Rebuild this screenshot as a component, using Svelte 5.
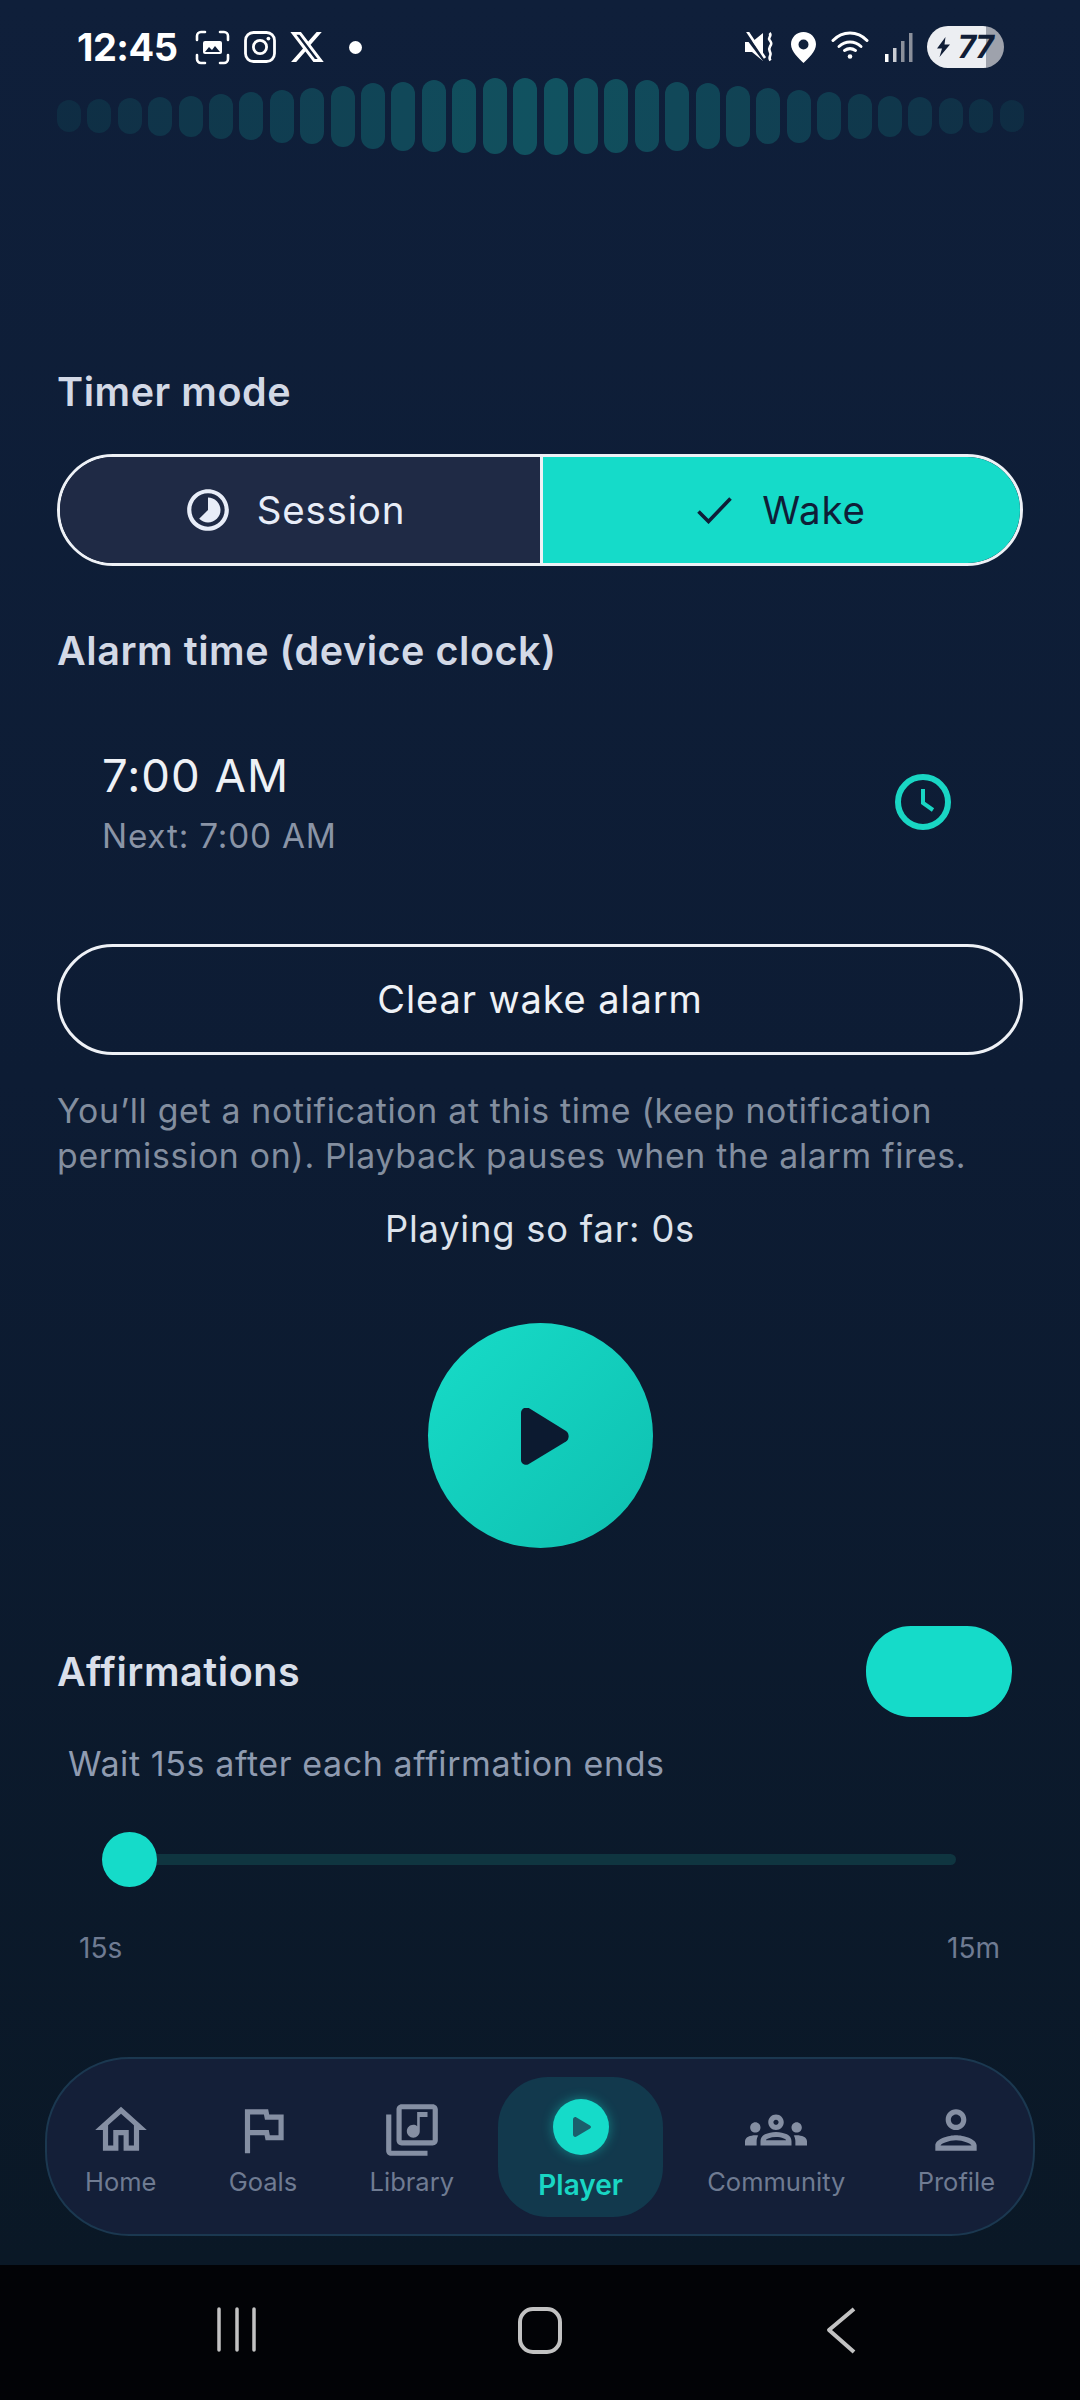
<script lang="ts">
	// Wave bar heights, left half; the right half mirrors it.
	const half = [32, 34, 36, 39, 41, 45, 48, 53, 56, 61, 66, 69, 72, 74, 76, 77];
	const bars = [...half, ...[...half].reverse()].map((h, i) => {
		const pos = i < 16 ? i : 31 - i;
		return { h, o: (0.08 + (pos / 15) * 0.2).toFixed(3) };
	});

	const nav = [
		{ label: 'Home', d: 'M12 5.69l5 4.5V18h-2v-6H9v6H7v-7.81l5-4.5M12 3L2 12h3v8h6v-6h2v6h6v-8h3L12 3z' },
		{ label: 'Goals', d: 'M12.36 6l.4 2H18v6h-3.36l-.4-2H7V6h5.36M14 4H5v17h2v-7h5.6l.4 2h7V6h-5.6L14 4z' },
		{ label: 'Library', d: 'M20 2H8c-1.1 0-2 .9-2 2v12c0 1.1.9 2 2 2h12c1.1 0 2-.9 2-2V4c0-1.1-.9-2-2-2zm0 14H8V4h12v12zm-7.5-1c1.38 0 2.5-1.12 2.5-2.5V7h3V5h-4v5.51c-.42-.32-.93-.51-1.5-.51-1.38 0-2.5 1.12-2.5 2.5s1.12 2.5 2.5 2.5zM4 6H2v14c0 1.1.9 2 2 2h14v-2H4V6z' },
		{ label: 'Player', active: true },
		{ label: 'Community', d: 'M4 13c1.1 0 2-.9 2-2s-.9-2-2-2-2 .9-2 2 .9 2 2 2zm1.13 1.1c-.37-.06-.74-.1-1.13-.1-.99 0-1.93.21-2.78.58C.48 14.9 0 15.62 0 16.43V18h4.5v-1.61c0-.83.23-1.61.63-2.29zM20 13c1.1 0 2-.9 2-2s-.9-2-2-2-2 .9-2 2 .9 2 2 2zm4 3.43c0-.81-.48-1.53-1.22-1.85-.85-.37-1.79-.58-2.78-.58-.39 0-.76.04-1.13.1.4.68.63 1.46.63 2.29V18H24v-1.57zm-7.76-2.78c-1.17-.52-2.61-.9-4.24-.9-1.63 0-3.07.39-4.24.9C6.68 14.13 6 15.21 6 16.39V18h12v-1.61c0-1.18-.68-2.26-1.76-2.74zM8.07 16c.09-.23.13-.39.91-.69.97-.38 1.99-.56 3.02-.56s2.05.18 3.02.56c.77.3.81.46.91.69H8.07zM12 8c.55 0 1 .45 1 1s-.45 1-1 1-1-.45-1-1 .45-1 1-1m0-2c-1.66 0-3 1.34-3 3s1.34 3 3 3 3-1.34 3-3-1.34-3-3-3z' },
		{ label: 'Profile', d: 'M12 6c1.1 0 2 .9 2 2s-.9 2-2 2-2-.9-2-2 .9-2 2-2m0 10c2.7 0 5.8 1.29 6 2H6c.23-.72 3.31-2 6-2m0-12C9.79 4 8 5.79 8 8s1.79 4 4 4 4-1.79 4-4-1.79-4-4-4zm0 10c-2.67 0-8 1.34-8 4v2h16v-2c0-2.66-5.33-4-8-4z' }
	];
</script>

<div class="page">
	<div class="status">
		<span class="clock">12:45</span>
		<svg class="s-shot" viewBox="0 0 35 35" fill="none">
			<path d="M2 10V6a4 4 0 0 1 4-4h4M25 2h4a4 4 0 0 1 4 4v4M33 25v4a4 4 0 0 1-4 4h-4M10 33H6a4 4 0 0 1-4-4v-4" stroke="#fff" stroke-width="2.6" stroke-linecap="round" />
			<path d="M10 11h15a2 2 0 0 1 2 2v9a2 2 0 0 1-2 2H10a2 2 0 0 1-2-2v-9a2 2 0 0 1 2-2z" fill="#fff" />
			<path d="M10 22l4-5 3 3 3-4 5 6z" fill="#0f1f3a" />
		</svg>
		<svg class="s-ig" viewBox="0 0 32 32" fill="none" stroke="#fff">
			<rect x="1.5" y="1.5" width="29" height="29" rx="8" stroke-width="2.8" />
			<circle cx="16" cy="16" r="6.6" stroke-width="2.8" />
			<circle cx="24.4" cy="7.6" r="1.9" fill="#fff" stroke="none" />
		</svg>
		<svg class="s-x" viewBox="1 2 22 20" fill="#fff">
			<path d="M18.244 2.25h3.308l-7.227 8.26 8.502 11.24H16.17l-5.214-6.817L4.99 21.75H1.68l7.73-8.835L1.254 2.25H8.08l4.713 6.231zm-1.161 17.52h1.833L7.084 4.126H5.117z" />
		</svg>
		<span class="dot"></span>
		<span class="spacer"></span>
		<svg class="s-mute" viewBox="0 0 30 30" fill="#fff">
			<path d="M0 10h7l11-9v28l-11-9H0z" />
			<path d="M-1 1l21 28" stroke="#0f1f3a" stroke-width="3.4" />
			<path d="M2 -1l18 27" stroke="#fff" stroke-width="2.6" />
			<path d="M24.500 1c3 3-2 4.500 0 7s2.500 3.500 .5 6.500 0 4.500 .5 7-2.500 4 0 7" fill="none" stroke="#fff" stroke-width="2.6" />
		</svg>
		<svg class="s-pin" viewBox="0 0 25 31" fill="#fff">
			<path fill-rule="evenodd" d="M12.500 0C5.600 0 0 5.500 0 12.300 0 20 8 26.500 12.500 31 17 26.500 25 20 25 12.300 25 5.500 19.400 0 12.500 0zm0 7.500a5 5 0 1 1 0 10 5 5 0 0 1 0-10z" />
		</svg>
		<svg class="s-wifi" viewBox="0 0 38 29" fill="none" stroke="#fff" stroke-width="3" stroke-linecap="round">
			<path d="M2 10.500C11.500 .5 26.500 .5 36 10.500" />
			<path d="M8 16.500c6.500-6 15.500-6 22 0" />
			<path d="M13.500 20.500c3.500-2.400 7.500-2.400 11 0" />
			<circle cx="19" cy="26.500" r="2.300" fill="#fff" stroke="none" />
		</svg>
		<svg class="s-sig" viewBox="0 0 28 29">
			<rect x="0" y="21" width="3.500" height="8" fill="#fff" />
			<rect x="8" y="15" width="3.500" height="14" fill="#c9ccd3" />
			<rect x="16" y="8" width="3.500" height="21" fill="#8b909b" />
			<rect x="24" y="0" width="3.500" height="29" fill="#8b909b" />
		</svg>
		<div class="battery">
			<svg viewBox="0 0 15 20" fill="#101d36"><path d="M9.500 0L1 11.500h5L3.500 20 14 7.500H8.500z" /></svg>
			<span>77</span>
		</div>
	</div>

	<div class="wave">
		{#each bars as b}
			<span style="height:{b.h}px;opacity:{b.o}"></span>
		{/each}
	</div>

	<main>
		<h2 class="timer">Timer mode</h2>
		<div class="segmented">
			<button class="seg">
				<svg class="i-lapse" viewBox="0 0 24 24" fill="#e8edf8"><path d="M16.240 7.760C15.070 6.590 13.540 6 12 6v6l-4.240 4.240c2.340 2.340 6.140 2.340 8.490 0 2.340-2.340 2.340-6.140-.01-8.480zM12 2C6.480 2 2 6.480 2 12s4.480 10 10 10 10-4.480 10-10S17.520 2 12 2zm0 18c-4.420 0-8-3.580-8-8s3.580-8 8-8 8 3.580 8 8-3.580 8-8 8z" /></svg>
				Session
			</button>
			<button class="seg on">
				<svg class="i-check" viewBox="0 0 35 27" fill="none" stroke="#0f1e38" stroke-width="3.600"><path d="M1.500 14.500l10 10 22-23" /></svg>
				Wake
			</button>
		</div>

		<h2 class="alarm">Alarm time (device clock)</h2>
		<div class="time-row">
			<div>
				<div class="time">7:00 AM</div>
				<div class="next">Next: 7:00 AM</div>
			</div>
			<svg class="i-clock" viewBox="0 0 56 56" fill="none" stroke="#19d6c4" stroke-width="6">
				<circle cx="28" cy="28" r="25" />
				<path d="M28 15v14l10 7" stroke-width="4" />
			</svg>
		</div>

		<button class="clear">Clear wake alarm</button>
		<p class="note">You’ll get a notification at this time (keep notification permission on). Playback pauses when the alarm fires.</p>
		<p class="playing">Playing so far: 0s</p>

		<button class="play" aria-label="Play">
			<svg viewBox="0 0 48 57" fill="#0c1a30"><path d="M0 5C0 1 3.500-1 7-.5L45 23c3.500 2.500 3.500 8 0 10.500L7 56.500c-3.500 1-7-1-7-4.500z" /></svg>
		</button>

		<div class="aff-row">
			<h2>Affirmations</h2>
			<span class="toggle"></span>
		</div>
		<p class="wait">Wait 15s after each affirmation ends</p>
		<div class="slider">
			<span class="thumb"></span>
			<span class="track"></span>
		</div>
		<div class="range"><span>15s</span><span>15m</span></div>
	</main>

	<nav>
		{#each nav as item}
			<div class="item" class:active={item.active}>
				{#if item.active}
					<span class="play-dot">
						<svg viewBox="0 0 18 20" fill="#1b5f6c"><path d="M0 2.500C0 .5 2-.5 3.500.5l13.500 8c1.300 .8 1.300 2.200 0 3l-13.500 8C2 20.500 0 19.500 0 17.500z" /></svg>
					</span>
				{:else}
					<svg class="nav-icon" viewBox="0 0 24 24" fill="#858fa3"><path d={item.d} /></svg>
				{/if}
				<span class="label">{item.label}</span>
			</div>
		{/each}
	</nav>

	<div class="sysbar">
		<svg viewBox="0 0 1080 135" fill="none" stroke="#c2c2c2">
			<path d="M219 44v41M237 44v41M254 44v41" stroke-width="3.500" stroke-linecap="round" />
			<rect x="520" y="44" width="40" height="43" rx="13" stroke-width="4" />
			<path d="M854 44L829 65l25 22" stroke-width="4" stroke-linejoin="round" />
		</svg>
	</div>
</div>

<style>
	:global(body) { margin: 0; background: #000; }
	.page {
		width: 1080px; height: 2400px; overflow: hidden; display: flex; flex-direction: column;
		background: linear-gradient(180deg, #0f1f3a 0%, #0d1c34 45%, #0a1826 94%);
		font-family: Inter, "Noto Sans", sans-serif; color: #fff;
	}

	.status { height: 60px; padding: 17px 76px 0 77px; display: flex; align-items: center; flex: none; }
	.clock { font-size: 38px; font-weight: 700; line-height: 60px; width: 118px; letter-spacing: -0.5px; }
	.status svg { flex: none; display: block; }
	.s-shot { width: 35px; height: 35px; }
	.s-ig { width: 32px; height: 32px; margin-left: 14px; }
	.s-x { width: 34px; height: 32px; margin-left: 14px; }
	.dot { width: 13px; height: 13px; border-radius: 50%; background: #fff; margin-left: 25px; }
	.spacer { flex: 1; }
	.s-mute { width: 30px; height: 30px; }
	.s-pin { width: 25px; height: 31px; margin-left: 16px; }
	.s-wifi { width: 38px; height: 29px; margin-left: 15px; margin-bottom: 6px; }
	.s-sig { width: 28px; height: 29px; margin-left: 16px; }
	.battery {
		width: 77px; height: 42px; margin-left: 14px; border-radius: 21px; display: flex; align-items: center;
		padding-left: 9px; box-sizing: border-box; color: #101d36;
		background: linear-gradient(90deg, #eceef2 0 59px, #9ea2ac 59px);
	}
	.battery svg { width: 15px; height: 20px; }
	.battery span { font-size: 32px; font-weight: 700; transform: skewX(-8deg); margin-left: 7px; line-height: 42px; letter-spacing: -1.5px; }

	.wave { height: 78px; margin: 0 56px 0 57px; display: flex; justify-content: space-between; align-items: center; flex: none; }
	.wave span { width: 24px; border-radius: 12px; background: #19d6c4; }

	main { padding: 0 57px; flex: none; }
	h2 { margin: 0; font-size: 39.5px; line-height: 44px; font-weight: 600; color: #d3d9e6; letter-spacing: 0.55px; }
	h2.timer { margin-top: 215px; }

	button { font-family: inherit; padding: 0; cursor: pointer; }
	.segmented {
		margin-top: 40px; height: 112px; box-sizing: border-box; display: flex;
		border: 3px solid #eef1f6; border-radius: 56px; overflow: hidden;
	}
	.seg {
		flex: none; width: 50%; box-sizing: border-box; border: 0; background: #1f2a45; color: #e8edf8; font-size: 38.5px; letter-spacing: 0.8px;
		display: flex; align-items: center; justify-content: center; gap: 24px; padding-right: 10px;
	}
	.seg.on { background: #15dbc9; color: #0f1e38; border-left: 3px solid #eef1f6; gap: 30px; padding-right: 0; }
	.i-lapse { width: 50px; height: 50px; margin-left: -2px; }
	.i-check { width: 35px; height: 27px; }

	h2.alarm { margin-top: 63px; }
	.time-row { margin-top: 77px; padding: 0 72px 0 45px; display: flex; align-items: center; justify-content: space-between; }
	.time { font-size: 45.5px; line-height: 52px; letter-spacing: 1px; color: #eef1f6; }
	.next { margin-top: 14px; font-size: 33.3px; line-height: 40px; letter-spacing: 0.8px; color: #8a94a6; }
	.i-clock { width: 56px; height: 56px; margin-top: -2px; }

	.clear {
		display: block; width: 100%; height: 111px; margin-top: 88px; padding-bottom: 2px; background: none;
		border: 3px solid #eef1f6; border-radius: 56px; color: #eef1f6; font-size: 38px; letter-spacing: 0.9px;
	}
	p { margin: 0; }
	.note { margin-top: 33px; font-size: 33.8px; line-height: 45px; letter-spacing: 0.7px; color: #838e9f; }
	.playing { margin-top: 29px; text-align: center; font-size: 36.3px; line-height: 44px; letter-spacing: 0.8px; color: #dde3ec; }

	.play {
		display: flex; align-items: center; justify-content: center; width: 225px; height: 225px; margin: 72px auto 0;
		border: 0; border-radius: 50%; background: linear-gradient(135deg, #17dcc8, #0ebfb0);
	}
	.play svg { width: 48px; height: 57px; margin: 2px 0 0 10px; }

	.aff-row { margin-top: 78px; padding-right: 11px; display: flex; align-items: center; justify-content: space-between; }
	.aff-row h2 { color: #d9dfea; }
	.toggle { width: 146px; height: 91px; border-radius: 45px; background: #15dbc9; }
	.wait { margin-top: 25px; padding-left: 11px; font-size: 34px; line-height: 44px; letter-spacing: 0.6px; color: #8f9bb0; }
	.slider { margin: 46px 67px 0 45px; display: flex; align-items: center; }
	.thumb { width: 55px; height: 55px; border-radius: 50%; background: #15dbc9; flex: none; }
	.track { flex: 1; height: 11px; background: #0f3540; border-radius: 0 6px 6px 0; }
	.range { margin-top: 43px; padding: 0 23px 0 22px; display: flex; justify-content: space-between; font-size: 28px; line-height: 36px; color: #6f7b92; }

	nav {
		margin: 91px 45px 0; height: 179px; box-sizing: border-box; flex: none;
		display: flex; justify-content: center; align-items: center; gap: 44.3px;
		background: #141f38; border: 2.5px solid #1b3850; border-radius: 84px;
	}
	.item { padding: 0 14px; display: flex; flex-direction: column; align-items: center; }
	.nav-icon { width: 62px; height: 62px; margin-top: 3px; }
	.label { font-size: 25.5px; line-height: 32px; color: #6f7b92; margin-top: 5px; }
	.item.active {
		margin: 0 -14px; padding: 0 40px; height: 140px; box-sizing: border-box; justify-content: flex-start;
		background: #12394d; border-radius: 50px;
	}
	.play-dot {
		width: 56px; height: 56px; margin-top: 22px; border-radius: 50%; background: #15dbc9;
		box-shadow: 0 0 12px rgba(21, 219, 201, 0.45); display: flex; align-items: center; justify-content: center;
	}
	.play-dot svg { width: 18px; height: 20px; margin-left: 3px; }
	.active .label { font-size: 28px; font-weight: 600; line-height: 36px; color: #19d6c4; margin-top: 12px; }

	.sysbar { margin-top: 29px; height: 135px; background: #020306; flex: none; }
	.sysbar svg { display: block; width: 1080px; height: 135px; }
</style>
